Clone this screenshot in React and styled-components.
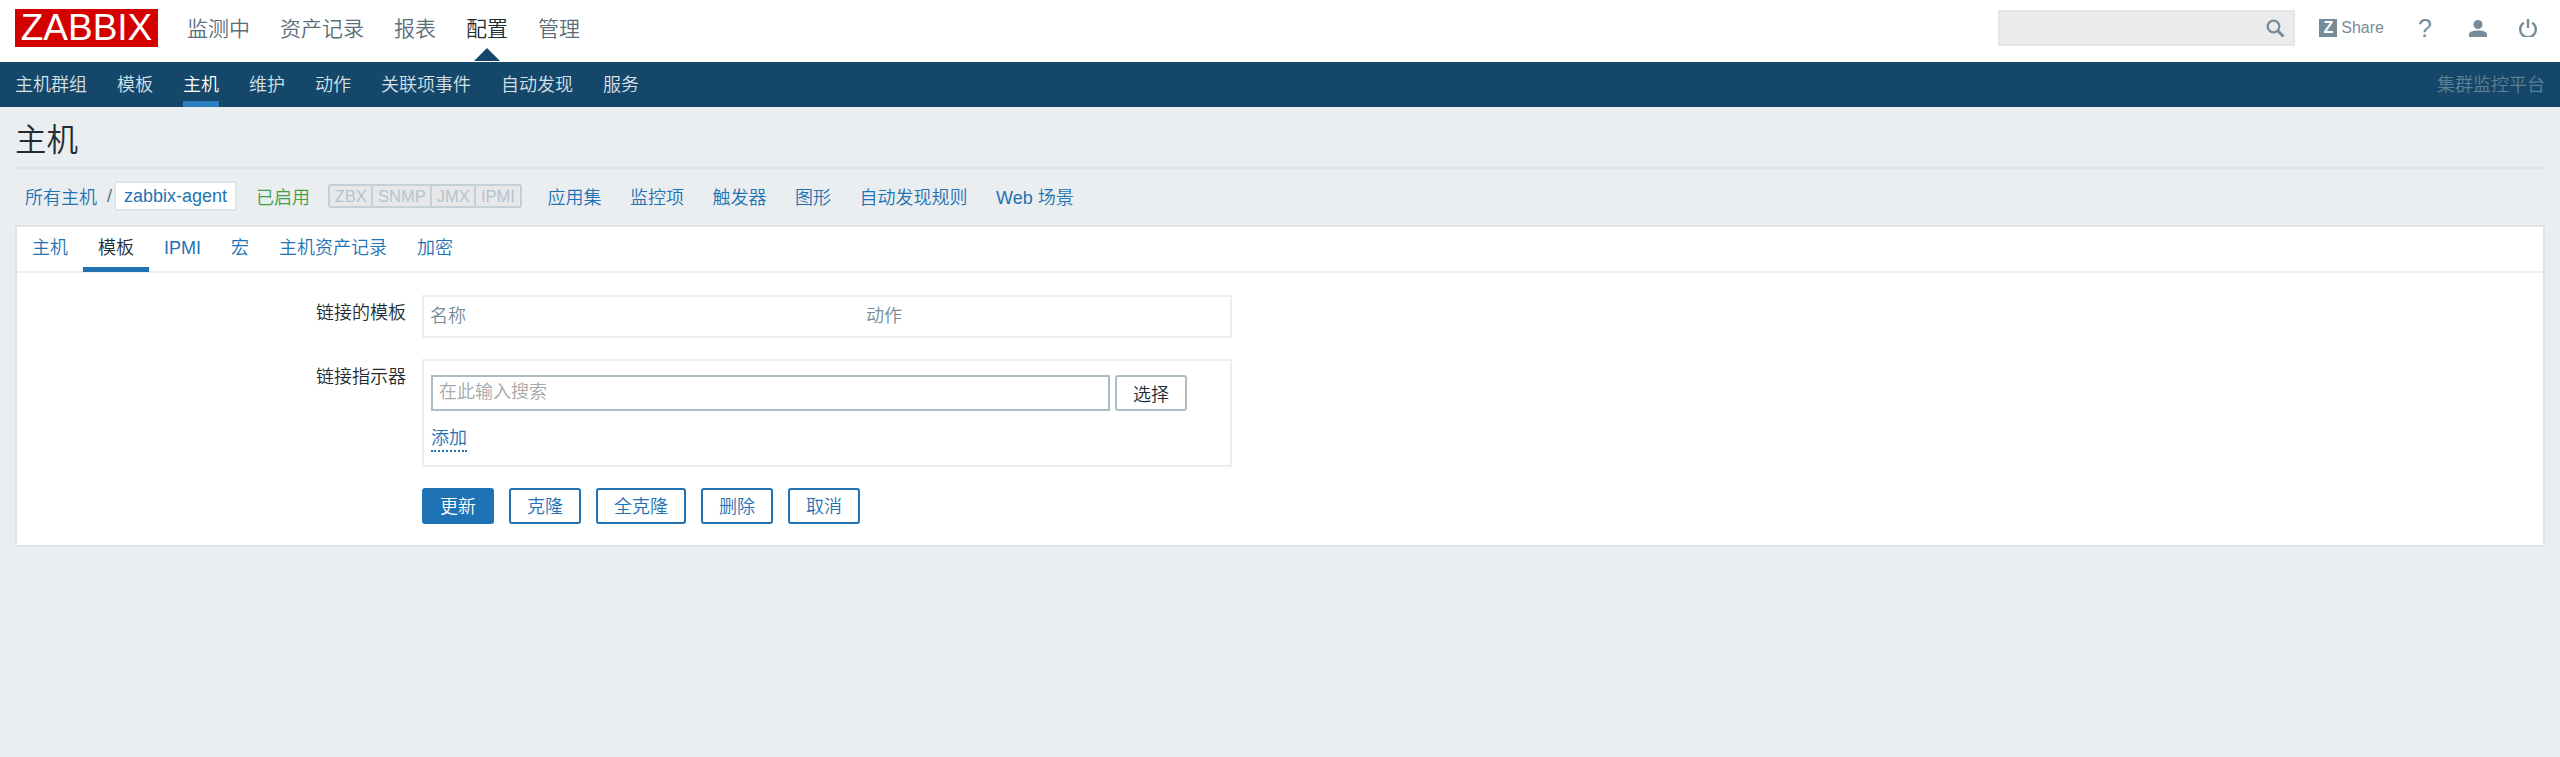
import React from 'react'
import styled, { createGlobalStyle } from 'styled-components'

const GlobalStyle = createGlobalStyle`
  html, body {
    margin: 0;
    padding: 0;
    background: #ebeef0;
  }
  body {
    min-height: 757px;
    font-family: "Liberation Sans", "Noto Sans CJK SC", sans-serif;
    font-size: 18px;
    font-weight: 350;
    color: #1f2c33;
  }
  * {
    box-sizing: border-box;
  }
`

const TopBar = styled.header`
  display: flex;
  align-items: center;
  height: 62px;
  padding: 0 15px;
  background: #fff;
`
const Logo = styled.div`
  width: 143px;
  height: 38px;
  margin: -6px 29px 0 0;
  background: #d40000;
  color: #fff;
  font-size: 37px;
  line-height: 38px;
  text-align: center;
`
const MainMenu = styled.nav`
  display: flex;
  gap: 30px;
  margin-top: -5px;
`
const MainItem = styled.a`
  position: relative;
  font-size: 21px;
  line-height: 30px;
  color: ${(p) => (p.$active ? '#1f2c33' : '#5a6e7a')};
  ${(p) =>
    p.$active &&
    `&::after {
      content: '';
      position: absolute;
      left: 50%;
      bottom: -17px;
      margin-left: -13px;
      border-left: 13px solid transparent;
      border-right: 13px solid transparent;
      border-bottom: 13px solid #15476a;
    }`}
`
const TopTools = styled.div`
  display: flex;
  align-items: center;
  margin-left: auto;
  margin-right: 8px;
  margin-top: -6px;
`
const SearchBox = styled.div`
  display: flex;
  align-items: center;
  justify-content: flex-end;
  width: 297px;
  height: 36px;
  padding-right: 8px;
  margin-right: 24px;
  background: #ebebeb;
  border: 2px solid #e5e5e5;
`
const ShareLink = styled.a`
  display: flex;
  align-items: center;
  gap: 4px;
  margin-right: 35px;
  font-size: 16px;
  color: #768d99;
`
const ZBadge = styled.span`
  display: block;
  width: 18px;
  height: 18px;
  background: #768d99;
  color: #fff;
  font-size: 16px;
  font-weight: 700;
  line-height: 18px;
  text-align: center;
`
const ToolIcon = styled.span`
  display: flex;
  justify-content: center;
  width: ${(p) => p.$w}px;
  margin-left: ${(p) => p.$gap}px;
  color: #768d99;
  font-size: 25px;
  line-height: 25px;
`

const SubBar = styled.nav`
  display: flex;
  align-items: stretch;
  height: 45px;
  padding: 0 15px;
  background: #15476a;
`
const SubMenu = styled.div`
  display: flex;
  gap: 30px;
`
const SubItem = styled.a`
  display: flex;
  align-items: center;
  height: 45px;
  border-bottom: 6px solid ${(p) => (p.$active ? '#2a7ebf' : 'transparent')};
  padding-top: 3px;
  color: ${(p) => (p.$active ? '#fff' : '#d6e0e7')};
`
const ServerName = styled.div`
  margin-left: auto;
  line-height: 47px;
  color: #5f8195;
`

const Content = styled.main`
  padding: 0 15px;
`
const Title = styled.h1`
  margin: 0;
  height: 62px;
  padding-top: 14px;
  font-size: 31.5px;
  line-height: 38px;
  font-weight: 350;
  color: #1f2c33;
  border-bottom: 2px solid #dfe4e7;
`
const Breadcrumbs = styled.div`
  display: flex;
  align-items: center;
  height: 54px;
  margin-bottom: 2px;
  padding-left: 10px;
`
const BlueLink = styled.a`
  color: #1f72b3;
`
const Slash = styled.span`
  margin: 0 2px 0 10px;
  color: #5a6e7a;
`
const CurrentHost = styled.a`
  padding: 4px 8px;
  margin-right: 19px;
  height: 30px;
  line-height: 18px;
  color: #1f72b3;
  background: #fff;
  border: 2px solid #dfe4e7;
  border-radius: 3px;
`
const StatusText = styled.span`
  margin-right: 18px;
  color: #429e47;
`
const StatusGroup = styled.div`
  display: flex;
  gap: 2px;
  height: 24px;
  margin-right: 26px;
  background: #c5d0d6;
  border: 2px solid #c5d0d6;
  border-radius: 3px;
`
const StatusItem = styled.span`
  padding: 0 4.6px;
  font-size: 16.5px;
  line-height: 20px;
  color: #b4c4cf;
  background: #e8e8e8;
`
const HostLinks = styled.div`
  display: flex;
  gap: 28.5px;
`

const Card = styled.section`
  height: 322px;
  background: #fff;
  border: 2px solid #dfe4e7;
`
const Tabs = styled.div`
  display: flex;
  height: 46px;
  border-bottom: 2px solid #ebeef0;
`
const Tab = styled.a`
  height: 45px;
  padding: 0 15px;
  line-height: 42px;
  color: ${(p) => (p.$active ? '#1f2c33' : '#1f72b3')};
  border-bottom: 5px solid ${(p) => (p.$active ? '#1f72b3' : 'transparent')};
`
const Form = styled.div`
  display: grid;
  grid-template-columns: 389px 810px;
  column-gap: 16px;
  padding-top: 22px;
`
const Label = styled.label`
  padding-top: 5px;
  line-height: 26px;
  text-align: right;
  color: #1f2c33;
`
const TemplateTable = styled.div`
  display: flex;
  height: 43px;
  margin-bottom: 21px;
  padding: 0 6px;
  border: 2px solid #ebeef0;
  line-height: 39px;
  color: #768d99;
`
const NameCol = styled.span`
  width: 436px;
`
const LinkBox = styled.div`
  height: 108px;
  margin-bottom: 21px;
  padding: 14px 7px 0;
  border: 2px solid #ebeef0;
`
const SearchRow = styled.div`
  display: flex;
  gap: 5px;
`
const SearchInput = styled.div`
  width: 679px;
  height: 36px;
  padding-left: 6px;
  line-height: 31px;
  color: #a8a8a8;
  border: 2px solid #acbbc4;
`
const SelectButton = styled.button`
  width: 72px;
  height: 36px;
  padding: 0;
  font: inherit;
  color: #1f2c33;
  background: #fff;
  border: 2px solid #acbbc4;
  border-radius: 3px;
`
const AddLink = styled.a`
  display: inline-block;
  margin-top: 15px;
  line-height: 24px;
  color: #1f72b3;
  border-bottom: 2px dotted #1f72b3;
`
const Actions = styled.div`
  grid-column: 2;
  display: flex;
  gap: 15px;
`
const ActionButton = styled.button`
  height: 36px;
  padding: 0 16px 2px;
  font: inherit;
  color: ${(p) => (p.$primary ? '#fff' : '#1f72b3')};
  background: ${(p) => (p.$primary ? '#1f72b3' : '#fff')};
  border: 2px solid #1f72b3;
  border-radius: 3px;
`

const SearchIcon = () => (
  <svg width="19" height="19" viewBox="0 0 19 19" fill="none" stroke="#768d99">
    <circle cx="7.5" cy="7.5" r="5.8" strokeWidth="2.2" />
    <path d="M12 12l5.500 5.500" strokeWidth="3" />
  </svg>
)
const UserIcon = () => (
  <svg width="18" height="17" viewBox="0 0 18 17" fill="#768d99">
    <circle cx="9" cy="4.500" r="4.500" />
    <path d="M0 17v-2.500C0 11.500 4 10.500 9 10.500s9 1 9 4v2.500z" />
  </svg>
)
const PowerIcon = () => (
  <svg width="18" height="18" viewBox="0 0 18 18" fill="none" stroke="#768d99" strokeWidth="2.400">
    <path d="M4.800 3.800a7.800 7.800 0 1 0 8.400 0" />
    <path d="M9 0v9" />
  </svg>
)

const mainItems = ['监测中', '资产记录', '报表', '配置', '管理']
const subItems = ['主机群组', '模板', '主机', '维护', '动作', '关联项事件', '自动发现', '服务']
const hostLinks = ['应用集', '监控项', '触发器', '图形', '自动发现规则', 'Web 场景']
const tabs = ['主机', '模板', 'IPMI', '宏', '主机资产记录', '加密']

export default function App() {
  return (
    <>
      <GlobalStyle />
      <TopBar>
        <Logo>ZABBIX</Logo>
        <MainMenu>
          {mainItems.map((item) => (
            <MainItem key={item} $active={item === '配置'}>
              {item}
            </MainItem>
          ))}
        </MainMenu>
        <TopTools>
          <SearchBox>
            <SearchIcon />
          </SearchBox>
          <ShareLink>
            <ZBadge>Z</ZBadge>
            Share
          </ShareLink>
          <ToolIcon $w={12} $gap={0}>?</ToolIcon>
          <ToolIcon $w={19} $gap={37}>
            <UserIcon />
          </ToolIcon>
          <ToolIcon $w={18} $gap={32}>
            <PowerIcon />
          </ToolIcon>
        </TopTools>
      </TopBar>
      <SubBar>
        <SubMenu>
          {subItems.map((item) => (
            <SubItem key={item} $active={item === '主机'}>
              {item}
            </SubItem>
          ))}
        </SubMenu>
        <ServerName>集群监控平台</ServerName>
      </SubBar>
      <Content>
        <Title>主机</Title>
        <Breadcrumbs>
          <BlueLink>所有主机</BlueLink>
          <Slash>/</Slash>
          <CurrentHost>zabbix-agent</CurrentHost>
          <StatusText>已启用</StatusText>
          <StatusGroup>
            {['ZBX', 'SNMP', 'JMX', 'IPMI'].map((s) => (
              <StatusItem key={s}>{s}</StatusItem>
            ))}
          </StatusGroup>
          <HostLinks>
            {hostLinks.map((l) => (
              <BlueLink key={l}>{l}</BlueLink>
            ))}
          </HostLinks>
        </Breadcrumbs>
        <Card>
          <Tabs>
            {tabs.map((t) => (
              <Tab key={t} $active={t === '模板'}>
                {t}
              </Tab>
            ))}
          </Tabs>
          <Form>
            <Label>链接的模板</Label>
            <TemplateTable>
              <NameCol>名称</NameCol>
              <span>动作</span>
            </TemplateTable>
            <Label>链接指示器</Label>
            <LinkBox>
              <SearchRow>
                <SearchInput>在此输入搜索</SearchInput>
                <SelectButton>选择</SelectButton>
              </SearchRow>
              <AddLink>添加</AddLink>
            </LinkBox>
            <Actions>
              <ActionButton $primary>更新</ActionButton>
              <ActionButton>克隆</ActionButton>
              <ActionButton>全克隆</ActionButton>
              <ActionButton>删除</ActionButton>
              <ActionButton>取消</ActionButton>
            </Actions>
          </Form>
        </Card>
      </Content>
    </>
  )
}
